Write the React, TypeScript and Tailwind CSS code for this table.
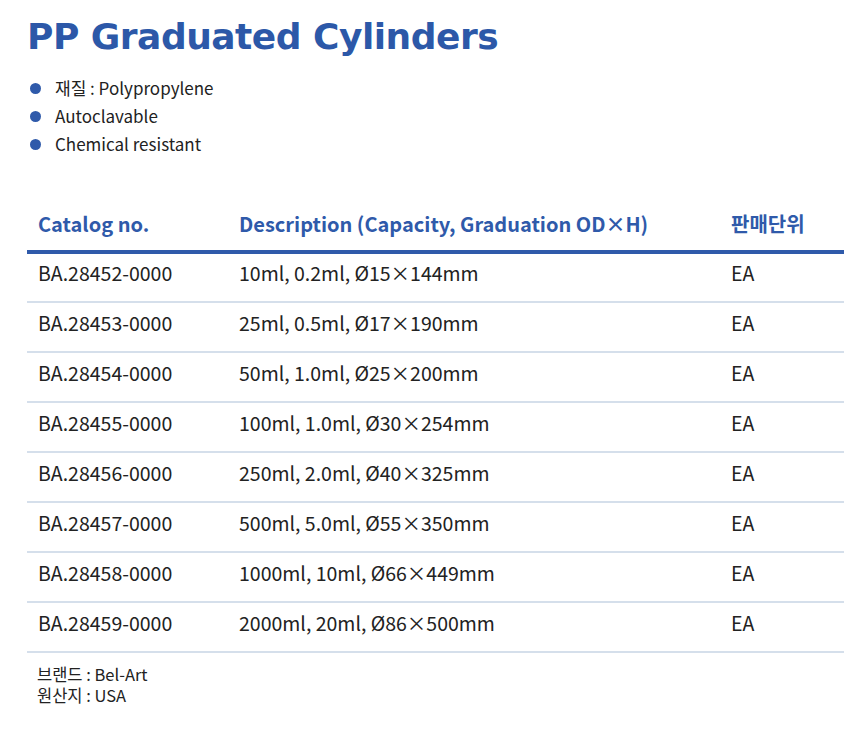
import React from "react";

const rows = [
  ["BA.28452-0000", "10ml, 0.2ml, Ø15×144mm"],
  ["BA.28453-0000", "25ml, 0.5ml, Ø17×190mm"],
  ["BA.28454-0000", "50ml, 1.0ml, Ø25×200mm"],
  ["BA.28455-0000", "100ml, 1.0ml, Ø30×254mm"],
  ["BA.28456-0000", "250ml, 2.0ml, Ø40×325mm"],
  ["BA.28457-0000", "500ml, 5.0ml, Ø55×350mm"],
  ["BA.28458-0000", "1000ml, 10ml, Ø66×449mm"],
  ["BA.28459-0000", "2000ml, 20ml, Ø86×500mm"],
];

const features = ["재질 : Polypropylene", "Autoclavable", "Chemical resistant"];

export default function App() {
  return (
    <div className="w-[860px] h-[735px] bg-white text-[#222] font-['Noto_Sans_CJK_KR','Noto_Sans',sans-serif]">
      <div className="pl-[27px] pr-[16px] pt-[14px]">
        <h1 className="font-['DejaVu_Sans',sans-serif] font-bold text-[36px] leading-[46px] text-[#2c58a8] tracking-[-0.5px]">
          PP Graduated Cylinders
        </h1>

        <ul className="mt-[14px] flex flex-col">
          {features.map((f) => (
            <li key={f} className="flex items-center h-[28px] text-[17px]">
              <span className="ml-[3px] w-[11px] h-[11px] rounded-full bg-[#2f5aaa]" />
              <span className="ml-[14px]">{f}</span>
            </li>
          ))}
        </ul>

        <table className="mt-[43px] w-[817px] border-collapse text-[19.5px]">
          <thead>
            <tr className="border-b-4 border-[#2f5aaa] text-[#2f5aaa] text-[20px]">
              <th className="h-[51px] pl-[11px] w-[212px] text-left font-bold align-top pt-[8px]">Catalog no.</th>
              <th className="text-left font-bold align-top pt-[8px]">Description (Capacity, Graduation OD×H)</th>
              <th className="w-[113px] text-left font-bold align-top pt-[8px]">판매단위</th>
            </tr>
          </thead>
          <tbody>
            {rows.map(([cat, desc]) => (
              <tr key={cat} className="border-b-2 border-[#d5dfeb]">
                <td className="h-[50px] pl-[11px] pb-[9px]">{cat}</td>
                <td className="pb-[9px]">{desc}</td>
                <td className="pb-[9px]">EA</td>
              </tr>
            ))}
          </tbody>
        </table>

        <div className="mt-[11px] pl-[10px] text-[16.5px] leading-[21px]">
          <p>브랜드 : Bel-Art</p>
          <p>원산지 : USA</p>
        </div>
      </div>
    </div>
  );
}
